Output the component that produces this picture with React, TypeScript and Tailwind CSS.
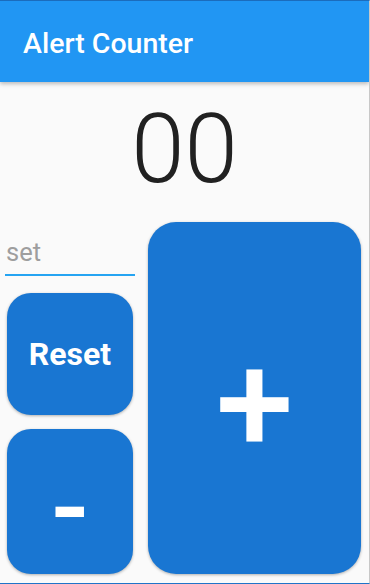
import React from "react";

export default function App() {
  return (
    <div
      className="w-[370px] h-[584px] bg-[#fafafa] flex flex-col border-t border-b border-r border-t-[#1b6cbc] border-b-[#1f74c8] border-r-[#c8c8c8] overflow-hidden"
      style={{ fontFamily: "Roboto, 'Noto Sans', sans-serif" }}
    >
      <header className="h-[81px] shrink-0 bg-[#2196F3] shadow-[0_2px_4px_rgba(0,0,0,0.25)] flex items-center pl-[23px] relative z-10">
        <h1 className="text-white text-[28.5px] font-medium leading-none pt-[6px]">Alert Counter</h1>
      </header>
      <div className="h-[140px] shrink-0 pt-[19px] text-center text-[96px] font-light leading-none text-[#212121]">
        00
      </div>
      <div className="flex gap-[13px] pl-[5px] pr-[8px] h-[352px]">
        <div className="w-[130px] flex flex-col">
          <div className="h-[54px] flex flex-col justify-end">
            <input
              placeholder="set"
              className="w-full bg-transparent outline-none text-[25.5px] leading-none pl-[1px] pb-[7px] border-b-2 border-[#25a4f2] placeholder-[#9e9e9e] text-[#212121]"
            />
          </div>
          <button className="mt-[17px] mx-[2px] h-[122px] rounded-[24px] bg-[#1976D2] text-white text-[32px] font-bold shadow-[0_1px_3px_rgba(0,0,0,0.3)] flex items-center justify-center">
            Reset
          </button>
          <button className="mt-[14px] mx-[2px] h-[145px] rounded-[24px] bg-[#1976D2] text-white text-[110px] font-medium leading-none pt-[13px] shadow-[0_1px_3px_rgba(0,0,0,0.3)] flex items-center justify-center">
            -
          </button>
        </div>
        <button className="flex-1 rounded-[28px] bg-[#1976D2] text-white text-[140px] font-medium leading-none pt-[12px] shadow-[0_1px_3px_rgba(0,0,0,0.3)] flex items-center justify-center">
          +
        </button>
      </div>
    </div>
  );
}
